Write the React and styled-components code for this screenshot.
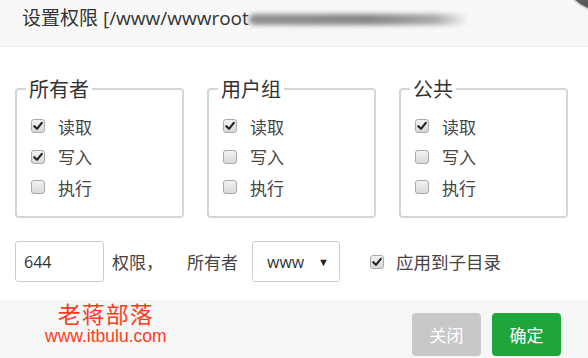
import React from "react";
import styled, { createGlobalStyle } from "styled-components";

const Global = createGlobalStyle`
  html, body { margin: 0; padding: 0; background: #fff; }
  body { font-family: "Open Sans", "Noto Sans CJK SC", sans-serif; color: #333; }
`;

const Dialog = styled.div`
  position: relative;
  width: 588px;
  height: 358px;
  overflow: hidden;
  display: flex;
  flex-direction: column;
  background: #fff;
`;

const Header = styled.div`
  height: 47px;
  flex-shrink: 0;
  box-sizing: border-box;
  background: #f8f8f8;
  border-bottom: 1px solid #eee;
  display: flex;
  align-items: flex-start;
  padding: 6px 22px 0;
  font-size: 19px;
  line-height: 24px;
  color: #333;
`;

const Blur = styled.span`
  display: inline-block;
  width: 220px;
  height: 11px;
  margin: 8px 0 0 0;
  background: linear-gradient(90deg, #909090 0%, #858585 55%, #ababab 85%, rgba(200,200,200,0) 100%);
  filter: blur(2.5px);
  border-radius: 6px;
`;

const CloseCorner = styled.span`
  position: absolute;
  right: -47px;
  top: -60px;
  width: 70px;
  height: 70px;
  border-radius: 50%;
  background: #5a5a5a;
  box-shadow: 0 0 2px 1px rgba(120,120,120,0.6);
`;

const Body = styled.div`
  flex: 1;
  padding: 0 15px;
  display: flex;
  flex-direction: column;
`;

const Groups = styled.div`
  display: flex;
  gap: 23px;
  margin-top: 30px;
`;

const Fieldset = styled.fieldset`
  width: 169px;
  height: 141px;
  box-sizing: border-box;
  margin: 0;
  padding: 10px 0 0 14px;
  border: 2px solid #d6d6d6;
  border-radius: 4px;
  display: flex;
  flex-direction: column;
`;

const Legend = styled.legend`
  font-family: "Noto Sans CJK SC", sans-serif;
  font-size: 20px;
  line-height: 24px;
  padding: 0 3px;
  margin-left: -5px;
  color: #333;
`;

const Row = styled.label`
  display: flex;
  align-items: center;
  height: 30.5px;
  font-family: "Noto Sans CJK SC", sans-serif;
  font-size: 17px;
  color: #444;
  gap: 13px;
`;

const Box = styled.span`
  width: 14px;
  height: 14px;
  box-sizing: border-box;
  border: 1px solid #a9a9a9;
  border-radius: 3px;
  background: linear-gradient(#f2f2f2, #d9d9d9);
  display: inline-flex;
  align-items: center;
  justify-content: center;
  flex-shrink: 0;
`;

const Check = ({ on }) => (
  <Box>
    {on && (
      <svg width="10" height="10" viewBox="0 0 10 10">
        <path d="M1.3 5.2 L4 7.8 L8.8 1.8" fill="none" stroke="#222" strokeWidth="2.1" strokeLinecap="round" strokeLinejoin="round" />
      </svg>
    )}
  </Box>
);

const Controls = styled.div`
  display: flex;
  align-items: center;
  margin-top: 23px;
  font-family: "Noto Sans CJK SC", sans-serif;
  font-size: 17px;
  color: #444;
`;

const Input = styled.div`
  width: 89px;
  height: 41px;
  box-sizing: border-box;
  border: 1px solid #ccc;
  border-radius: 3px;
  padding-left: 8px;
  display: flex;
  align-items: center;
  font-family: "Open Sans", sans-serif;
  font-size: 16px;
  color: #333;
`;

const Label = styled.span`
  margin-left: ${p => p.ml || 0}px;
`;

const Select = styled.div`
  width: 88px;
  height: 41px;
  box-sizing: border-box;
  margin-left: 14px;
  border: 1px solid #ccc;
  border-radius: 3px;
  display: flex;
  align-items: center;
  justify-content: space-between;
  padding: 0 10px 0 14px;
  font-family: "Open Sans", sans-serif;
  font-size: 16px;
  color: #333;
`;

const Arrow = styled.span`
  font-size: 11px;
  color: #222;
`;

const Apply = styled(Row)`
  margin-left: 30px;
  gap: 12px;
  font-size: 17.5px;
`;

const Footer = styled.div`
  height: 58px;
  flex-shrink: 0;
  background: #f5f6f6;
  display: flex;
  justify-content: space-between;
  align-items: flex-start;
  padding: 0 27px 0 45px;
`;

const Logo = styled.div`
  display: flex;
  flex-direction: column;
  align-items: center;
  color: #ff3b1f;
`;

const LogoCn = styled.span`
  font-family: "Noto Sans CJK SC", sans-serif;
  font-size: 23px;
  line-height: 26px;
  letter-spacing: 1px;
`;

const LogoUrl = styled.span`
  font-family: "Liberation Sans", sans-serif;
  font-size: 17.5px;
  line-height: 20px;
`;

const Buttons = styled.div`
  display: flex;
  gap: 11px;
  margin-top: 13px;
`;

const Button = styled.button`
  width: 69px;
  height: 43px;
  border: none;
  border-radius: 4px;
  background: ${p => (p.primary ? "#20a53a" : "#c8c8c8")};
  color: #fff;
  font-family: "Noto Sans CJK SC", sans-serif;
  font-size: 17px;
  padding: 0;
`;

const groups = [
  { name: "所有者", vals: [true, true, false] },
  { name: "用户组", vals: [true, false, false] },
  { name: "公共", vals: [true, false, false] },
];
const perms = ["读取", "写入", "执行"];

export default function App() {
  return (
    <>
      <Global />
      <Dialog>
        <Header>
          <span>设置权限 [/www/wwwroot</span>
          <Blur />
        </Header>
        <CloseCorner />
        <Body>
          <Groups>
            {groups.map(g => (
              <Fieldset key={g.name}>
                <Legend>{g.name}</Legend>
                {perms.map((p, i) => (
                  <Row key={p}>
                    <Check on={g.vals[i]} />
                    {p}
                  </Row>
                ))}
              </Fieldset>
            ))}
          </Groups>
          <Controls>
            <Input>644</Input>
            <Label ml={8}>权限，</Label>
            <Label ml={24}>所有者</Label>
            <Select>
              <span>www</span>
              <Arrow>▼</Arrow>
            </Select>
            <Apply>
              <Check on />
              应用到子目录
            </Apply>
          </Controls>
        </Body>
        <Footer>
          <Logo>
            <LogoCn>老蒋部落</LogoCn>
            <LogoUrl>www.itbulu.com</LogoUrl>
          </Logo>
          <Buttons>
            <Button>关闭</Button>
            <Button primary>确定</Button>
          </Buttons>
        </Footer>
      </Dialog>
    </>
  );
}
